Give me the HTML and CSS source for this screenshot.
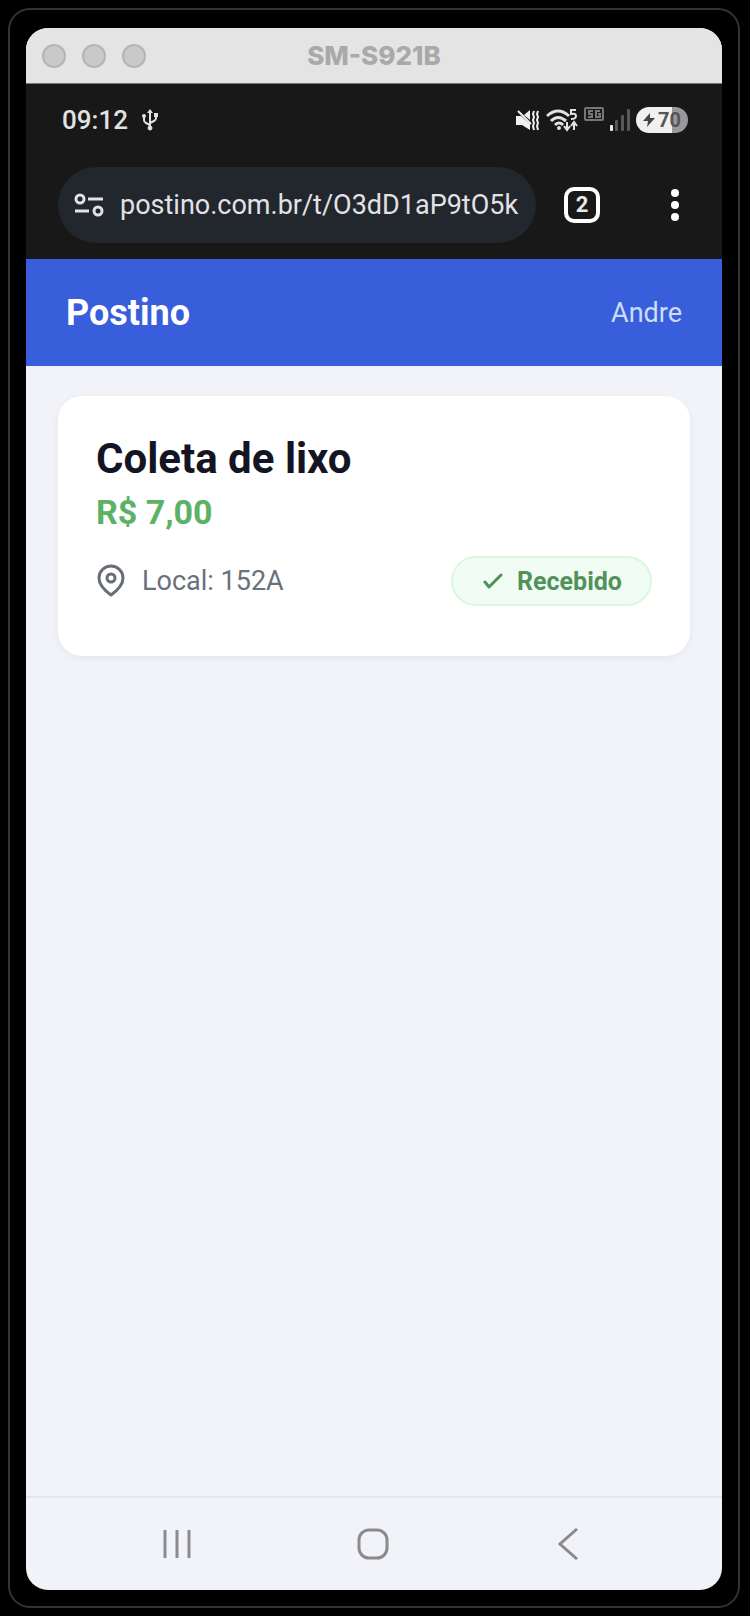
FILE: index.html
```html
<!DOCTYPE html>
<html lang="pt-BR">

<head>
    <meta charset="UTF-8">
    <meta name="viewport" content="width=device-width, initial-scale=1.0">
    <title>Postino</title>
    <link rel="stylesheet" href="styles.css">
</head>

<body>
    <div class="frame">
        <div class="window">
            <div class="titlebar">
                <div class="lights">
                    <span class="light"></span>
                    <span class="light"></span>
                    <span class="light"></span>
                </div>
                <div class="device">SM-S921B</div>
            </div>

            <div class="statusbar">
                <div class="status-left">
                    <span class="time">09:12</span>
                    <svg width="16" height="22" viewBox="0 0 16 22" fill="none" stroke="#e2e2e2" stroke-width="2">
                        <path d="M8 3v16M2 8v3q0 2 2 3l4 2M14 6v3q0 2-2 3l-4 2" />
                        <path d="M8 0l3 4H5z" fill="#e2e2e2" stroke="none" />
                        <circle cx="8" cy="19" r="2" fill="#e2e2e2" stroke-width="1" />
                        <circle cx="2" cy="7" r="2" fill="#e2e2e2" stroke="none" />
                        <path d="M12 4h4v4h-4z" fill="#e2e2e2" stroke="none" />
                    </svg>
                </div>
                <div class="status-right">
                    <!-- muted / vibrate -->
                    <svg width="24" height="22" viewBox="0 0 24 22" fill="#f0f0f0">
                        <path d="M0 7h5l9 8v6l-8-5H0z" />
                        <path d="M8 6l6-5v10z" />
                        <path d="M2 2l13 13" stroke="#f0f0f0" stroke-width="2" />
                        <path d="M18 2l-1 3 1 3-1 3 1 3-1 3 1 4M22 2l-1 3 1 3-1 3 1 3-1 3 1 4" fill="none" stroke="#f0f0f0" stroke-width="2" />
                    </svg>
                    <!-- wifi 5 -->
                    <svg width="32" height="24" viewBox="0 0 32 24" fill="none" stroke="#e2e2e2" stroke-width="3">
                        <path d="M1 8q11-10 22 0M5 13q7-7 15 0M9 17q4-4 8 0" />
                        <circle cx="13" cy="20" r="2" fill="#e2e2e2" stroke="none" />
                        <path d="M30 2h-5v4q5-1 5 2t-5 3" stroke-width="2" />
                        <path d="M21 14v7m-3-3l3 4 3-4M28 22v-8m-3 4l3-4 3 4" stroke-width="2" />
                    </svg>
                    <!-- 5G, no signal -->
                    <svg class="fiveg" width="20" height="14" viewBox="0 0 20 14" fill="none" stroke="#77777a" stroke-width="2">
                        <rect x="1" y="1" width="18" height="12" rx="1" />
                        <path d="M9 4H5v3h3v3H4M16 4h-4v6h4V7h-2" />
                    </svg>
                    <svg width="20" height="22" viewBox="0 0 20 22" fill="#58585a">
                        <rect x="0" y="16" width="3" height="6" rx="1" fill="#f0f0f0" />
                        <rect x="5" y="11" width="3" height="11" rx="1" />
                        <rect x="11" y="6" width="3" height="16" rx="1" />
                        <rect x="17" y="0" width="3" height="22" rx="1" />
                    </svg>
                    <div class="battery">
                        <svg width="12" height="14" viewBox="0 0 12 14" fill="#444">
                            <path d="M7 0L0 8h5l-1 6 8-9H7z" />
                        </svg>
                        <span>70</span>
                    </div>
                </div>
            </div>

            <div class="browser">
                <div class="address">
                    <button class="icon-btn" type="button" aria-label="Informações do site">
                        <svg width="30" height="26" viewBox="0 0 30 26" fill="none" stroke="#e2e2e2" stroke-width="3">
                            <circle cx="6" cy="7" r="4" />
                            <path d="M14 7h15M1 19h14" />
                            <circle cx="24" cy="19" r="4" />
                        </svg>
                    </button>
                    <input class="url" type="text" aria-label="Endereço" value="postino.com.br/t/O3dD1aP9tO5k">
                </div>
                <button class="tabs" type="button" aria-label="Abas abertas">2</button>
                <button class="icon-btn" type="button" aria-label="Mais opções">
                    <svg width="10" height="34" viewBox="0 0 10 34" fill="#fff">
                        <circle cx="5" cy="5" r="4" />
                        <circle cx="5" cy="17" r="4" />
                        <circle cx="5" cy="29" r="4" />
                    </svg>
                </button>
            </div>

            <header class="header">
                <h1>Postino</h1>
                <span class="user">Andre</span>
            </header>

            <main class="content">
                <section class="card">
                    <h2>Coleta de lixo</h2>
                    <p class="price">R$ 7,00</p>
                    <div class="card-row">
                        <div class="place">
                            <svg width="30" height="34" viewBox="0 0 30 34" fill="none" stroke="#686d78" stroke-width="3">
                                <path d="M15 31C8 26 3 21 3 14a12 12 0 0 1 24 0c0 7-5 12-12 17z" stroke-linejoin="round" />
                                <circle cx="15" cy="14" r="4" />
                            </svg>
                            <span>Local: 152A</span>
                        </div>
                        <div class="badge">
                            <svg width="20" height="16" viewBox="0 0 20 16" fill="none" stroke="#50925a" stroke-width="3" stroke-linecap="round" stroke-linejoin="round">
                                <path d="M2 9l4 5L18 2" />
                            </svg>
                            <span>Recebido</span>
                        </div>
                    </div>
                </section>
            </main>

            <nav class="navbar">
                <button type="button" aria-label="Recentes">
                    <svg width="32" height="32" viewBox="0 0 32 32" stroke="#8b8b8d" stroke-width="3">
                        <path d="M4 2v28M16 2v28M28 2v28" />
                    </svg>
                </button>
                <button type="button" aria-label="Início">
                    <svg width="32" height="32" viewBox="0 0 32 32" fill="none" stroke="#8b8b8d" stroke-width="3">
                        <rect x="2" y="2" width="28" height="28" rx="10" />
                    </svg>
                </button>
                <button type="button" aria-label="Voltar">
                    <svg width="32" height="32" viewBox="0 0 32 32" fill="none" stroke="#8b8b8d" stroke-width="3">
                        <path d="M25 1L8 16l17 15" />
                    </svg>
                </button>
            </nav>
        </div>
    </div>
</body>

</html>
```

FILE: styles.css
```css
* {
    box-sizing: border-box;
    margin: 0;
    padding: 0;
}

body {
    display: flex;
    min-height: 100vh;
    padding: 8px 10px 8px 8px;
    background-color: #000;
    font-family: Roboto, "Liberation Sans", sans-serif;
}

svg {
    display: block;
    flex-shrink: 0;
}

button {
    border: none;
    background: none;
    font-family: inherit;
}

.frame {
    display: flex;
    flex: 1;
    min-width: 0;
    padding: 18px 16px 16px;
    border: 2px solid #333;
    border-radius: 22px;
}

.window {
    display: flex;
    flex-direction: column;
    flex: 1;
    min-width: 0;
    overflow: hidden;
    border-radius: 22px;
    background-color: #f2f3f8;
}

/* title bar */
.titlebar {
    display: grid;
    grid-template-columns: 1fr auto 1fr;
    align-items: center;
    height: 56px;
    padding: 0 16px;
    background-color: #e4e4e4;
    border-bottom: 1px solid #777;
}

.lights {
    display: flex;
    gap: 16px;
}

.light {
    width: 24px;
    height: 24px;
    border: 2px solid #b5b5b5;
    border-radius: 50%;
    background-color: #c9c9c9;
}

.device {
    font-family: Inter, sans-serif;
    font-size: 26px;
    font-weight: 800;
    color: #a9a9a9;
}

/* android status bar */
.statusbar {
    display: flex;
    justify-content: space-between;
    align-items: center;
    height: 72px;
    padding: 0 34px 0 36px;
    background-color: #181818;
}

.status-left {
    display: flex;
    align-items: center;
    gap: 14px;
}

.time {
    font-size: 26px;
    font-weight: 500;
    color: #e2e2e2;
}

.status-right {
    display: flex;
    align-items: center;
    gap: 6px;
}

.fiveg {
    align-self: flex-start;
}

.battery {
    display: flex;
    align-items: center;
    justify-content: center;
    gap: 3px;
    width: 52px;
    height: 26px;
    border-radius: 13px;
    background: linear-gradient(to right, #f0f0f0 70%, #98989c 70%);
    font-size: 20px;
    font-weight: 700;
    color: #555;
}

/* browser toolbar */
.browser {
    display: flex;
    align-items: center;
    height: 103px;
    padding: 0 42px 6px 32px;
    background-color: #181818;
}

.address {
    display: flex;
    align-items: center;
    flex: 1;
    gap: 16px;
    min-width: 0;
    height: 76px;
    padding: 0 14px 0 16px;
    border-radius: 38px;
    background-color: #22262d;
}

.icon-btn {
    flex-shrink: 0;
}

.url {
    flex: 1;
    min-width: 0;
    border: none;
    outline: none;
    background: none;
    font-family: inherit;
    font-size: 27px;
    color: #e2e2e6;
}

.tabs {
    width: 36px;
    height: 36px;
    margin: 0 70px 0 28px;
    border: 4px solid #fff;
    border-radius: 10px;
    font-size: 22px;
    font-weight: 700;
    line-height: 28px;
    color: #e8e8e8;
}

/* app */
.header {
    display: flex;
    justify-content: space-between;
    align-items: center;
    height: 107px;
    padding: 0 40px;
    background-color: #385edb;
}

.header h1 {
    font-size: 36px;
    font-weight: 700;
    color: #fff;
}

.user {
    font-size: 27px;
    color: #cddcf8;
}

.content {
    flex: 1;
    padding: 30px 32px;
}

.card {
    padding: 38px 38px 50px;
    border-radius: 24px;
    background-color: #fff;
    box-shadow: 0 2px 6px rgba(20, 20, 50, 0.06);
}

.card h2 {
    font-size: 42px;
    font-weight: 700;
    line-height: 50px;
    color: #141524;
}

.price {
    margin-top: 8px;
    font-size: 34px;
    font-weight: 700;
    line-height: 40px;
    color: #5bb166;
}

.card-row {
    display: flex;
    justify-content: space-between;
    align-items: center;
    margin-top: 24px;
}

.place {
    display: flex;
    align-items: center;
    gap: 16px;
    font-size: 27px;
    color: #6a707c;
}

.badge {
    display: flex;
    align-items: center;
    gap: 14px;
    height: 50px;
    padding: 0 28px 0 30px;
    border: 2px solid #d9f8de;
    border-radius: 25px;
    background-color: #f1fdf4;
    font-size: 25px;
    font-weight: 700;
    color: #50925a;
}

/* navigation bar */
.navbar {
    display: flex;
    justify-content: space-between;
    padding: 30px 122px 30px 119px;
    border-top: 2px solid #e5e6ea;
}

.navbar button {
    display: flex;
    justify-content: center;
    width: 64px;
}
```
